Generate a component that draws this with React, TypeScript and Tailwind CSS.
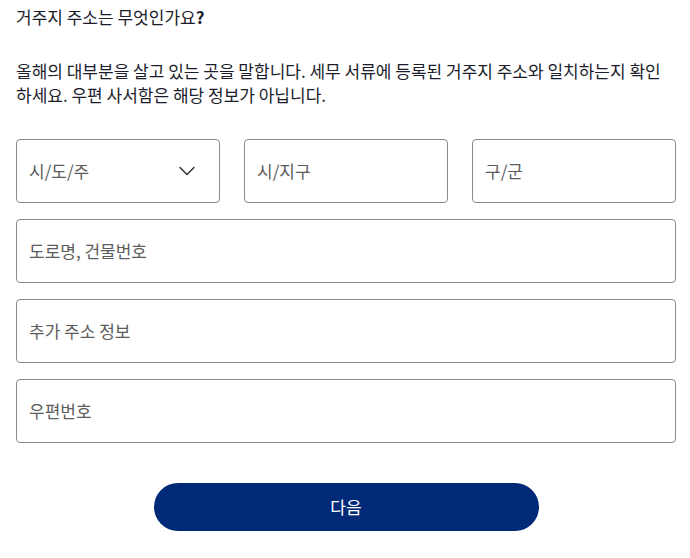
import React from "react";

const font = { fontFamily: '"Noto Sans CJK KR", "Noto Sans", sans-serif' };

function Field({ label, chevron }: { label: string; chevron?: boolean }) {
  return (
    <div className="h-16 rounded border border-[#8a8a8a] flex items-center justify-between pl-3 pr-[23px] text-[#5c5c5c] text-[17px]">
      <span>{label}</span>
      {chevron && (
        <svg width="18" height="18" viewBox="0 0 18 18" fill="none" className="text-[#333]">
          <path d="M2 5.5 L9 12.5 L16 5.5" stroke="currentColor" strokeWidth="1.5" strokeLinecap="round" strokeLinejoin="round" />
        </svg>
      )}
    </div>
  );
}

export default function App() {
  return (
    <div className="w-[690px] h-[558px] bg-white px-4 pt-[4px] text-[#1b1d2b]" style={font}>
      <div className="w-[660px]">
        <h1 className="text-[17px] leading-[26px]">
          거주지 주소는 무엇인가요<span className="font-bold">?</span>
        </h1>
        <p className="mt-[29px] text-[17px] leading-6">
          올해의 대부분을 살고 있는 곳을 말합니다. 세무 서류에 등록된 거주지 주소와 일치하는지 확인하세요. 우편 사서함은 해당 정보가 아닙니다.
        </p>
        <div className="mt-8 flex flex-col gap-4">
          <div className="grid grid-cols-3 gap-[24px]">
            <Field label="시/도/주" chevron />
            <Field label="시/지구" />
            <Field label="구/군" />
          </div>
          <Field label="도로명, 건물번호" />
          <Field label="추가 주소 정보" />
          <Field label="우편번호" />
        </div>
        <div className="mt-10 flex justify-center">
          <button className="w-[385px] h-12 rounded-full bg-[#002a78] text-white text-[17px]">다음</button>
        </div>
      </div>
    </div>
  );
}
